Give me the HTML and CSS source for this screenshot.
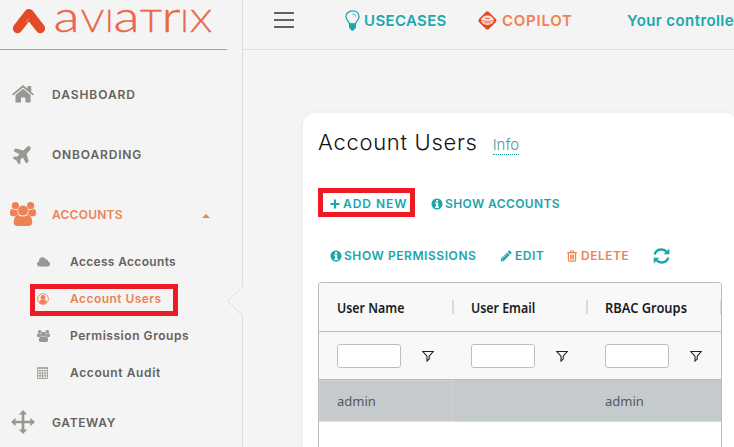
FILE: index.html
```html
<!DOCTYPE html>
<html lang="en">
<head>
<meta charset="utf-8">
<title>Account Users</title>
<link rel="stylesheet" href="styles.css">
</head>
<body>
<svg width="0" height="0" class="defs">
  <symbol id="users" viewBox="0 0 26 24">
    <circle cx="5.4" cy="3.7" r="3.6"/><circle cx="20.6" cy="3.7" r="3.6"/>
    <path d="M0 10.5C0 8 1 6.8 2.5 7.2c1.600.9 3.600.9 5.200.2 -.8 2.500.3 4.300 1.200 5.400 -1.800.2-2.800.7-3.900 1.400H2.400C.9 14.100 0 13.100 0 11.500zM26 10.500c0-2.500-1-3.700-2.500-3.300-1.600.9-3.600.9-5.200.2.8 2.500-.3 4.300-1.200 5.400 1.800.2 2.800.7 3.900 1.400h2.600c1.500-.1 2.400-1.100 2.400-2.700z"/>
    <circle cx="13" cy="8.600" r="5"/>
    <path d="M8.300 13c3 2 6.400 2 9.400 0 3.300.2 4.500 3.500 4.500 7.600 0 2.100-1.300 3.400-3.400 3.400H7.200c-2.100 0-3.400-1.300-3.400-3.400 0-4.100 1.200-7.400 4.500-7.600z"/>
  </symbol>
  <symbol id="info" viewBox="0 0 12 12">
    <path fill-rule="evenodd" d="M6 .5a5.500 5.500 0 1 0 0 11 5.500 5.500 0 0 0 0-11zM5 2h2.200v1.700H5zM4.200 4.600h3v4h.8v1.300H4.200V8.600H5V5.900h-.8z"/>
  </symbol>
  <symbol id="funnel" viewBox="0 0 12 12">
    <path d="M.8 1.500h10.400L7.200 6.200v2.900L5 11V6.200z" fill="none" stroke="#222" stroke-width="1.100"/>
  </symbol>
</svg>
<div class="app">
  <aside class="sidebar">
    <div class="brand">
      <svg width="215" height="40" viewBox="0 0 215 40">
        <path d="M17.600 28.400 29 13.800 40.300 28.400" fill="none" stroke="#e34a26" stroke-width="9.600" stroke-linecap="round" stroke-linejoin="round"/>
        <path d="M28.500 18.500l-2.500 4.300" stroke="#f0a08c" stroke-width=".8"/>
        <g class="wordmark"><text class="lc" x="53.500" y="32" textLength="26" lengthAdjust="spacingAndGlyphs">a</text><text class="uc" x="81" y="32" textLength="23" lengthAdjust="spacingAndGlyphs">V</text><text class="uc" x="105.200" y="32">I</text><text class="lc" x="113.500" y="32" textLength="26" lengthAdjust="spacingAndGlyphs">a</text><text class="uc" x="140" y="32" textLength="22" lengthAdjust="spacingAndGlyphs">T</text><text class="lc" x="161.500" y="32" textLength="19" lengthAdjust="spacingAndGlyphs">r</text><text class="uc" x="180.500" y="32">I</text><text class="uc" x="190" y="32" textLength="22" lengthAdjust="spacingAndGlyphs">X</text></g>
      </svg>
    </div>
    <nav class="nav">
      <a class="item"><span class="ico"><svg width="22" height="18" viewBox="0 0 22 18"><path d="M11 0 15.500 3.800V1h3.700v5.900L22 9.300l-1.100 1.300L11 2.400 1.100 10.600 0 9.300z"/><path d="M11 3.800 18.600 10v7.500h-5.200v-5H9v5H3.500V10z"/></svg></span><span class="t-dashboard">DASHBOARD</span></a>
      <a class="item"><span class="ico"><svg width="22" height="22" viewBox="-20 -32 616 576"><path transform="rotate(-45 288 256)" d="M480 192H365.710L260.610 8.060A16 16 0 0 0 246.710 0h-65.500c-10.630 0-18.300 10.170-15.380 20.390L214.860 192H112l-43.200-57.600c-3-4-7.800-6.400-12.800-6.400H16C5.600 128-2 137.800.5 147.900L32 256 .5 364.100C-2 374.200 5.600 384 16 384h40c5 0 9.800-2.400 12.800-6.400L112 320h102.860l-49 171.600c-3 10.200 4.700 20.400 15.400 20.400h65.500c5.700 0 11-3 13.900-8L365.700 320H480c35.400 0 96-28.700 96-64s-60.600-64-96-64z"/></svg></span><span class="t-onboarding">ONBOARDING</span></a>
      <a class="item active"><span class="ico"><svg width="26" height="24"><use href="#users"/></svg></span><span class="t-accounts">ACCOUNTS</span><i class="caret"></i></a>
      <div class="sub">
        <a class="subitem"><span class="sico"><svg width="13" height="10" viewBox="0 0 13 10"><path d="M3 9.500C1.200 9.500 0 8.400 0 6.900 0 5.600.8 4.800 1.900 4.400 1.700 1.900 3.400.3 5.500.3c1.600 0 2.700.8 3.200 2.200 1.500-.5 2.700.6 2.300 2 1.200.3 2 1.200 2 2.400 0 1.500-1.100 2.600-2.700 2.600z"/></svg></span><span class="s-access">Access Accounts</span></a>
        <a class="subitem active"><span class="sico"><svg width="12" height="12" viewBox="0 0 12 12"><circle cx="6" cy="6" r="5.400" fill="none" stroke="currentColor" stroke-width=".9"/><circle cx="6" cy="4.500" r="2.400"/><path d="M2.200 9.400C2.400 7.700 3.300 7 4.500 6.600c1 .6 2 .6 3 0 1.200.4 2.100 1.100 2.300 2.800C7.700 11.500 4.300 11.500 2.200 9.400z"/></svg></span><span class="s-users">Account Users</span></a>
        <a class="subitem"><span class="sico"><svg width="13" height="12"><use href="#users"/></svg></span><span class="s-groups">Permission Groups</span></a>
        <a class="subitem"><span class="sico"><svg width="12" height="12" viewBox="0 0 12 12"><path d="M.5.5h10v11H.5zM1 3.500h9M.5 6.200h10M.5 8.800h10M3 4v7.500M5.500 4v7.500M8 4v7.500M1 1.500h9" fill="none" stroke="currentColor" stroke-width=".8"/></svg></span><span class="s-audit">Account Audit</span></a>
        <div class="highlight highlight-nav"></div>
      </div>
      <a class="item"><span class="ico"><svg width="24" height="24" viewBox="0 0 24 24"><path d="M12 0l4.200 4.600h-2.900v6.100h6.100V7.800L24 12l-4.600 4.200v-2.900h-6.100v6.100h2.900L12 24l-4.200-4.600h2.900v-6.100H4.600v2.900L0 12l4.600-4.200v2.900h6.100V4.600H7.800z"/></svg></span><span class="t-gateway">GATEWAY</span></a>
    </nav>
    <svg class="notch" width="17" height="32" viewBox="0 0 17 32"><path d="M17 0v32h-1.500V30.500L.7 16 15.500 1.500V0z" fill="#f4f4f4"/><path d="M15.500.5v1L.7 16l14.800 14.500v1" fill="none" stroke="#dcdcdc"/></svg>
  </aside>
  <div class="main">
    <header class="topbar">
      <div class="burger"><i></i><i></i><i></i></div>
      <a class="link usecases"><svg width="15" height="21" viewBox="0 0 15 21"><path d="M4.500 14C4.300 11.500 1 10.400 1 6.700 1 3.300 3.700.8 7.500.8S14 3.300 14 6.700c0 3.700-3.300 4.800-3.500 7.300z" fill="none" stroke="currentColor" stroke-width="1.300"/><path d="M4 13.500h7v4.200l-1.500 1.500-1 1.500h-2l-1-1.500L4 17.700z"/><path d="M7.500 4c1.700 0 2.800.8 3 2.400" fill="none" stroke="currentColor"/></svg><span>USECASES</span></a>
      <a class="link copilot"><svg width="21" height="21" viewBox="0 0 21 21"><rect x="3.300" y="3.300" width="14.200" height="14.200" rx="2.500" transform="rotate(45 10.400 10.400)" fill="#e34a26"/><ellipse cx="10.400" cy="10.300" rx="6.300" ry="4.700" fill="#fbe4de"/><path d="M4.500 10.300c3 1.400 9 1.400 12 0M7 12.800h7" fill="none" stroke="#e9775c"/><path d="M8 8.400h5" stroke="#e9775c" stroke-width="1.300"/></svg><span>COPILOT</span></a>
      <span class="notice">Your controlle</span>
    </header>
    <section class="card">
      <div class="title"><h1>Account Users</h1><a class="info">Info</a></div>
      <div class="actions first">
        <a class="btn add"><svg width="10" height="10" viewBox="0 0 10 10"><path d="M3.900.5h2.200v3.400h3.400v2.200H6.100v3.400H3.900V6.100H.5V3.900h3.400z"/></svg><span>ADD NEW</span></a>
        <a class="btn show-acc"><svg width="12" height="12"><use href="#info"/></svg><span>SHOW ACCOUNTS</span></a>
        <div class="highlight highlight-add"></div>
      </div>
      <div class="actions second">
        <a class="btn perms"><svg width="12" height="12"><use href="#info"/></svg><span>SHOW PERMISSIONS</span></a>
        <a class="btn edit"><svg width="12" height="12" viewBox="0 0 12 12"><path fill-rule="evenodd" d="M8.700.8c.4-.4.8-.4 1.200 0l1.400 1.400c.4.4.4.8 0 1.200L10.200 4.500 7.600 1.900zM7 2.500 9.600 5.100 3.500 11.200.7 11.500 1 8.500zM2 8.900 1.700 10.500 3.200 10.200zM6.800 3.800 3 7.600l.3.300 3.800-3.800z"/></svg><span>EDIT</span></a>
        <a class="btn delete"><svg width="10" height="12" viewBox="0 0 10 12"><path d="M.2 2.700h9.600M3.200 2.500l.5-1.500h2.600l.5 1.500M1.400 3v7.300c0 .5.300.8.700.8h5.800c.4 0 .7-.3.700-.8V3M3.500 4.500v5M5 4.500v5M6.500 4.500v5" fill="none" stroke="currentColor" stroke-width="1.200"/></svg><span>DELETE</span></a>
        <a class="btn refresh"><svg width="17" height="16" viewBox="0 0 17 16"><path d="M1.700 6.500C2.500 3.300 5.200 1.500 8.400 1.500c2 0 3.700.8 5 2.100M15.300 9.500c-.8 3.200-3.500 5-6.700 5-2 0-3.700-.8-5-2.100" fill="none" stroke="currentColor" stroke-width="2.300"/><path d="M16.300.5v5.700h-5.700zM.7 15.500V9.800h5.700z"/></svg></a>
      </div>
      <div class="grid">
        <div class="row head">
          <div class="cell"><span class="h-name">User Name</span></div><div class="cell"><span class="h-mail">User Email</span></div><div class="cell"><span class="h-rbac">RBAC Groups</span></div>
        </div>
        <div class="row filter">
          <div class="cell"><input type="text"><svg width="12" height="12"><use href="#funnel"/></svg></div><div class="cell"><input type="text"><svg width="12" height="12"><use href="#funnel"/></svg></div><div class="cell"><input type="text"><svg width="12" height="12"><use href="#funnel"/></svg></div>
        </div>
        <div class="row data">
          <div class="cell focus">admin</div><div class="cell"></div><div class="cell">admin</div>
        </div>
      </div>
    </section>
  </div>
</div>
</body>
</html>
```
FILE: styles.css
```css
* { box-sizing: border-box; }
body { margin: 0; width: 734px; height: 447px; overflow: hidden; background: #f4f4f4; font-family: Inter, "Liberation Sans", sans-serif; }
.defs { position: absolute; }
svg { display: block; fill: currentColor; flex: none; }
.app { display: flex; height: 447px; overflow: hidden; }

.sidebar { position: relative; width: 243px; flex: none; border-right: 1px solid #dcdcdc; }
.brand { width: 227px; height: 50px; border-bottom: 1px solid #a3a3a3; }
.wordmark { font-family: Lato, sans-serif; font-weight: 300; fill: #e8694a; stroke: #e8694a; stroke-width: .4; }
.wordmark .lc { font-size: 43px; }
.wordmark .uc { font-size: 31px; }
.nav { padding-top: 14px; color: #66615b; font-weight: 600; font-size: 12px; }
.item { display: flex; align-items: center; height: 60px; }
.ico { width: 46px; margin-right: 6px; display: flex; justify-content: center; color: #9a9691; }
.item.active, .item.active .ico, .subitem.active, .subitem.active .sico { color: #ef8157; }
.caret { margin-left: auto; margin-right: 32px; margin-top: 4px; border: 4px solid transparent; border-top: 0; border-bottom: 4px solid #ef8157; }
.sub { position: relative; margin-top: -1px; height: 149px; }
.subitem { display: flex; align-items: center; height: 37px; padding-left: 36px; }
.sico { width: 14px; margin-right: 20px; display: flex; justify-content: center; color: #9a9691; }
.notch { position: absolute; left: 227px; top: 285px; }

.t-dashboard { letter-spacing: .95px; }
.t-onboarding { letter-spacing: .85px; }
.t-accounts { letter-spacing: .25px; }
.t-gateway { letter-spacing: .65px; }
.s-access { letter-spacing: .33px; }
.s-users { letter-spacing: .45px; }
.s-groups { letter-spacing: .55px; }
.s-audit { letter-spacing: .62px; }

.highlight { position: absolute; border: 5px solid #ed1c24; }
.highlight-nav { left: 30px; top: 41px; width: 148px; height: 32px; }
.highlight-add { left: 0; top: 0; width: 97px; height: 29px; }

.main { flex: 1; min-width: 0; }
.topbar { display: flex; align-items: center; height: 50px; padding: 0 0 9px 31px; border-bottom: 1px solid #dcdcdc; color: #1aa8ad; font-weight: 600; font-size: 15px; white-space: nowrap; }
.burger { display: flex; flex-direction: column; gap: 5px; width: 20px; margin-right: 51px; }
.burger i { height: 2px; background: #66615b; }
.link { display: flex; align-items: center; flex: none; }
.usecases { width: 132px; gap: 4px; letter-spacing: .35px; }
.copilot { width: 150px; gap: 4px; letter-spacing: .75px; color: #ef8157; }
.notice { letter-spacing: .42px; }

.card { width: 434px; height: 400px; margin: 63px 0 0 60px; padding: 12px 0 0 15px; border-radius: 12px; background: #fff; box-shadow: 0 1px 6px rgba(0,0,0,.06); }
.title { display: flex; align-items: baseline; height: 36px; }
h1 { margin: 0 15px 0 0; font-size: 22px; line-height: 34px; font-weight: 300; letter-spacing: .7px; color: #111; }
.info { font-size: 15px; line-height: 19px; font-weight: 300; color: #4d989b; border-bottom: 1px dotted #1a9ca2; }
.actions { position: relative; display: flex; align-items: center; color: #1aa5aa; font-weight: 600; font-size: 12px; }
.first { margin-top: 27px; height: 31px; }
.second { margin-top: 21px; height: 31px; }
.btn { display: flex; align-items: center; gap: 3px; }
.add { width: 101px; margin-left: 12px; letter-spacing: .95px; }
.show-acc { gap: 2px; letter-spacing: .4px; }
.perms { width: 170px; margin-left: 12px; gap: 2px; letter-spacing: .57px; }
.edit { width: 67px; letter-spacing: .5px; }
.delete { width: 86px; gap: 4px; letter-spacing: .5px; color: #ef8157; }

.grid { width: 404px; height: 190px; margin-top: 11px; border: 1px solid #bab9c5; border-radius: 3px; overflow: hidden; font-family: "Noto Sans", sans-serif; }
.row { display: flex; width: 402px; }
.cell { position: relative; display: flex; align-items: center; width: 134px; flex: none; padding-left: 18px; }
.head, .filter { background: #f8f8f8; border-bottom: 1px solid #bab9c5; }
.head { height: 49px; font-weight: 600; font-size: 14px; color: #181d1f; padding-top: 1px; }
.head .cell::after { content: ""; position: absolute; right: -1px; top: 16px; width: 2px; height: 14px; background: #d8dce0; }
.head span { transform-origin: left center; }
.h-name { transform: scaleX(.885); }
.h-mail { transform: scaleX(.885); }
.h-rbac { transform: scaleX(.92); }
.filter { height: 48px; }
.filter input { width: 64px; height: 24px; padding: 0 5px; border: 1px solid #babfc7; border-radius: 3px; background: #fff; }
.filter svg { margin-left: 21px; }
.data { height: 42px; background: #c5cacc; border-bottom: 1px solid #d9dce3; font-size: 13px; color: #56585d; }
.data .cell { padding-top: 0; }
.focus { border: 1px solid #d3d0d4; }
.data .focus { padding-left: 17px; }
```
